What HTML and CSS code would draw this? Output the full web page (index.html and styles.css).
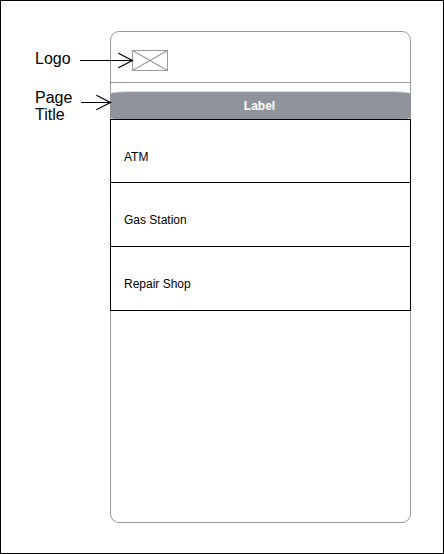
FILE: index.html
```html
<!DOCTYPE html>
<html lang="en">
<head>
<meta charset="utf-8">
<title>Wireframe</title>
<link rel="stylesheet" href="styles.css">
</head>
<body>
<main class="board">
  <aside class="notes">
    <div class="note note-logo">
      <span>Logo</span>
      <svg class="arrow" width="53" height="17" viewBox="0 0 53 17"><path d="M0 8.5H52.5M38.3 1.3L52.5 8.5L38.3 15.7"/></svg>
    </div>
    <div class="note note-title">
      <span>Page<br>Title</span>
      <svg class="arrow" width="30" height="17" viewBox="0 0 30 17"><path d="M0 8.5H29.5M15.3 1.3L29.5 8.5L15.3 15.7"/></svg>
    </div>
  </aside>
  <section class="phone">
    <header class="header">
      <svg width="36" height="21" viewBox="0 0 36 21"><path d="M.5 .5H35.5V20.5H.5ZL35.5 20.5M35.5 .5L.5 20.5"/></svg>
    </header>
    <h1 class="title">Label</h1>
    <ul class="list">
      <li>ATM</li>
      <li>Gas Station</li>
      <li>Repair Shop</li>
    </ul>
  </section>
</main>
</body>
</html>
```
FILE: styles.css
```css
* { box-sizing: border-box; }
body {
  margin: 0;
  background: #fff;
  color: #000;
  font-family: "Liberation Sans", Arial, sans-serif;
}
.board {
  display: flex;
  width: 444px;
  height: 554px;
  padding: 30px 0 0 34px;
  border: 1px solid #000;
}
.notes {
  position: relative;
  z-index: 1;
  width: 75px;
  padding-top: 19px;
  font-size: 16px;
  line-height: 17px;
}
.note { display: flex; align-items: flex-start; }
.note span { flex: none; }
.note-logo span { width: 45px; }
.note-title { margin-top: 20px; }
.note-title span { width: 46px; }
.arrow { flex: none; margin-top: 2px; overflow: visible; }
.note-title .arrow { margin-top: 5px; }
.arrow path { fill: none; stroke: #000; stroke-width: 1.2; }
.phone {
  width: 301px;
  height: 492px;
  border: 1px solid #999;
  border-radius: 9px;
}
.header {
  height: 51px;
  padding: 18px 0 0 21px;
  border-bottom: 1px solid #999;
}
.header svg { display: block; }
.header path { fill: none; stroke: #999; stroke-width: 1.1; }
.title {
  height: 28px;
  margin: 8px -1px 0;
  padding-right: 2px;
  border-top: 1px solid #dcdee0;
  border-radius: 20px 20px 8px 8px / 3px 3px 2px 2px;
  background: #8f939b;
  color: #fff;
  font-size: 12px;
  line-height: 28px;
  text-align: center;
}
.list {
  margin: 0 -1px;
  padding: 0;
  border: 1px solid #000;
  list-style: none;
  font-size: 12px;
}
.list li {
  height: 64px;
  padding: 30px 13px 0;
  border-bottom: 1px solid #000;
  line-height: 14px;
}
.list li:first-child { height: 63px; }
.list li:last-child { height: 63px; border-bottom: 0; }
```
